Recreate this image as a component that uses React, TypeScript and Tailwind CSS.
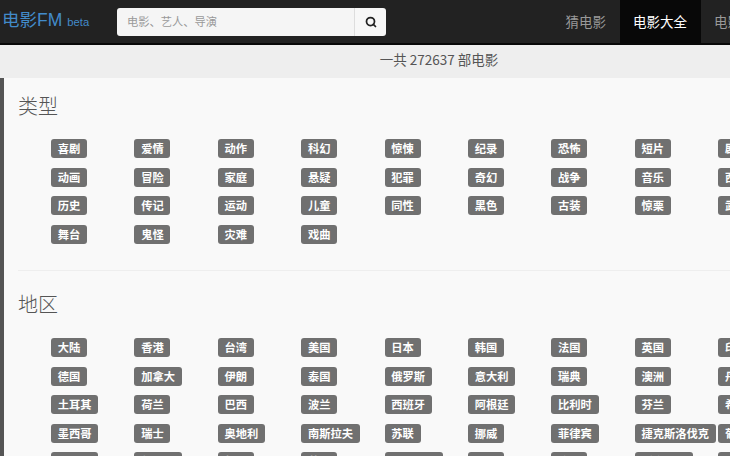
import { Search } from "lucide-react";

const genres = [
  "喜剧", "爱情", "动作", "科幻", "惊悚", "纪录", "恐怖", "短片", "剧情",
  "动画", "冒险", "家庭", "悬疑", "犯罪", "奇幻", "战争", "音乐", "西部",
  "历史", "传记", "运动", "儿童", "同性", "黑色", "古装", "惊栗", "武侠",
  "舞台", "鬼怪", "灾难", "戏曲",
];

const regions = [
  "大陆", "香港", "台湾", "美国", "日本", "韩国", "法国", "英国", "印度",
  "德国", "加拿大", "伊朗", "泰国", "俄罗斯", "意大利", "瑞典", "澳洲", "丹麦",
  "土耳其", "荷兰", "巴西", "波兰", "西班牙", "阿根廷", "比利时", "芬兰", "希腊",
  "墨西哥", "瑞士", "奥地利", "南斯拉夫", "苏联", "挪威", "菲律宾", "捷克斯洛伐克", "葡萄牙",
  "匈牙利", "新加坡", "越南", "蒙古", "罗马尼亚", "古巴", "埃及", "斯洛伐克", "冰岛",
];

function TagGrid({ tags }: { tags: string[] }) {
  return (
    <ul className="ml-[33px] grid grid-cols-[repeat(9,83.4px)] auto-rows-[28.5px]">
      {tags.map((tag) => (
        <li key={tag} className="flex items-start whitespace-nowrap">
          <a className="h-[19px] rounded-[3px] bg-[#707070] px-[6.75px] text-[11.25px] leading-[18px] font-bold text-white">
            {tag}
          </a>
        </li>
      ))}
    </ul>
  );
}

export default function App() {
  return (
    <div className="h-[456px] w-[730px] overflow-hidden bg-[#f9f9f9] font-['Noto_Sans_CJK_SC',sans-serif] text-[#555]">
      <div className="w-[878px]">
        <header className="flex h-[45px] border-b-2 border-[#080808] bg-[#222]">
          <a className="ml-[2px] flex w-[115px] items-baseline pt-[8px] leading-[25px] text-[#428bca]">
            <span className="font-['Liberation_Sans','Noto_Sans_CJK_SC',sans-serif] text-[17.5px]">电影FM</span>
            <span className="ml-[5px] font-['Liberation_Sans',sans-serif] text-[11.25px]">beta</span>
          </a>
          <form className="mt-[8px] flex h-[28px] w-[269px]">
            <input
              placeholder="电影、艺人、导演"
              className="w-[237px] rounded-l-[3px] bg-[#f5f5f5] pb-[2px] pl-[10px] text-[11.25px] placeholder:text-[#999] focus:outline-none"
            />
            <button type="button" className="flex w-[32px] items-center justify-center rounded-r-[3px] border-l border-[#ddd] bg-[#f7f7f7]">
              <Search className="h-[12px] w-[12px] text-[#222]" strokeWidth={3.5} />
            </button>
          </form>
          <nav className="ml-[166px] flex text-[13.5px] leading-[43px] text-[#999]">
            <a className="px-[13.5px]">猜电影</a>
            <a className="bg-[#080808] px-[13.5px] text-white">电影大全</a>
            <a className="px-[13.5px]">电影榜单</a>
          </nav>
        </header>

        <div className="h-[33px] bg-[#eee] text-center text-[13.5px] leading-[28px]">一共 272637 部电影</div>

        <main className="h-[378px] border-l-4 border-[#555] pt-[17px] pl-[14px]">
          <h2 className="text-[20px] leading-[22px] font-light">类型</h2>
          <div className="mt-[22px]">
            <TagGrid tags={genres} />
          </div>
          <hr className="mt-[17px] border-[#eee]" />
          <h2 className="mt-[22px] text-[20px] leading-[22px] font-light">地区</h2>
          <div className="mt-[23px]">
            <TagGrid tags={regions} />
          </div>
        </main>
      </div>
    </div>
  );
}
